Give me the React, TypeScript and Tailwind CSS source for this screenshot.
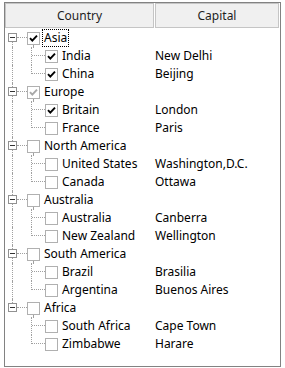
import React from "react";

type Child = { name: string; capital: string; checked: boolean };
type Group = { name: string; state: "checked" | "gray" | "none"; focused?: boolean; children: Child[] };

const data: Group[] = [
  { name: "Asia", state: "checked", focused: true, children: [
    { name: "India", capital: "New Delhi", checked: true },
    { name: "China", capital: "Beijing", checked: true },
  ] },
  { name: "Europe", state: "gray", children: [
    { name: "Britain", capital: "London", checked: true },
    { name: "France", capital: "Paris", checked: false },
  ] },
  { name: "North America", state: "none", children: [
    { name: "United States", capital: "Washington,D.C.", checked: false },
    { name: "Canada", capital: "Ottawa", checked: false },
  ] },
  { name: "Australia", state: "none", children: [
    { name: "Australia", capital: "Canberra", checked: false },
    { name: "New Zealand", capital: "Wellington", checked: false },
  ] },
  { name: "South America", state: "none", children: [
    { name: "Brazil", capital: "Brasilia", checked: false },
    { name: "Argentina", capital: "Buenos Aires", checked: false },
  ] },
  { name: "Africa", state: "none", children: [
    { name: "South Africa", capital: "Cape Town", checked: false },
    { name: "Zimbabwe", capital: "Harare", checked: false },
  ] },
];

function CheckBox({ state }: { state: "checked" | "gray" | "none" }) {
  return (
    <div className="w-[13px] h-[13px] border border-[#b0b0b0] bg-white shrink-0 flex items-center justify-center">
      {state !== "none" && (
        <svg width="11" height="11" viewBox="0 0 11 11">
          <path
            d="M2 5.2 L4.3 7.6 L9 2.6"
            fill="none"
            stroke={state === "checked" ? "#000" : "#a8a8a8"}
            strokeWidth="1.9"
          />
        </svg>
      )}
    </div>
  );
}

function Expander() {
  return (
    <div className="absolute left-[3px] top-[4px] w-[9px] h-[9px] border border-[#919191] bg-white flex items-center justify-center">
      <div className="w-[5px] h-px bg-[#333]" />
    </div>
  );
}

export default function App() {
  return (
    <div
      className="ml-[4px] mt-[2px] w-[277px] h-[365px] border border-[#828282] bg-white flex flex-col"
      style={{ fontFamily: '"Noto Sans", "Open Sans", sans-serif' }}
    >
      <div className="flex h-[25px] text-[12px] text-[#1e1e1e] bg-white">
        <div className="w-[149px] border border-[#c5c5c5] bg-[#f0f0f0] flex items-center justify-center">Country</div>
        <div className="w-px" />
        <div className="w-[124px] border border-[#c5c5c5] bg-[#f0f0f0] flex items-center justify-center">Capital</div>
      </div>
      <div className="pt-[1px] text-[12px] text-black">
        {data.map((g, gi) => {
          const lastGroup = gi === data.length - 1;
          return (
            <React.Fragment key={gi}>
              <div className="relative h-[18px] flex items-center">
                {gi > 0 && <div className="absolute left-[7px] top-0 h-[4px] border-l border-dotted border-[#a0a0a0]" />}
                {!lastGroup && <div className="absolute left-[7px] top-[13px] h-[5px] border-l border-dotted border-[#a0a0a0]" />}
                <Expander />
                <div className="absolute left-[12px] top-[8px] w-[10px] border-t border-dotted border-[#a0a0a0]" />
                <div className="absolute left-[28px] top-[16px] h-[2px] border-l border-dotted border-[#a0a0a0]" />
                <div className="pl-[22px] flex items-center">
                  <CheckBox state={g.state} />
                  <div className={`ml-[2px] px-[1px] h-[18px] flex items-center border border-dotted ${g.focused ? "border-black" : "border-transparent"}`}>
                    {g.name}
                  </div>
                </div>
              </div>
              {g.children.map((c, ci) => {
                const lastChild = ci === g.children.length - 1;
                return (
                  <div key={ci} className="relative h-[18px] flex items-center">
                    {!lastGroup && <div className="absolute left-[7px] top-0 h-[18px] border-l border-dotted border-[#a0a0a0]" />}
                    <div className={`absolute left-[26px] top-0 ${lastChild ? "h-[9px]" : "h-[18px]"} border-l border-dotted border-[#a0a0a0]`} />
                    <div className="absolute left-[27px] top-[8px] w-[13px] border-t border-dotted border-[#a0a0a0]" />
                    <div className="w-[150px] pl-[40px] flex items-center shrink-0">
                      <CheckBox state={c.checked ? "checked" : "none"} />
                      <div className="ml-[2px] px-[1px] h-[18px] flex items-center border border-transparent whitespace-nowrap">
                        {c.name}
                      </div>
                    </div>
                    <div className="whitespace-nowrap">{c.capital}</div>
                  </div>
                );
              })}
            </React.Fragment>
          );
        })}
      </div>
    </div>
  );
}
